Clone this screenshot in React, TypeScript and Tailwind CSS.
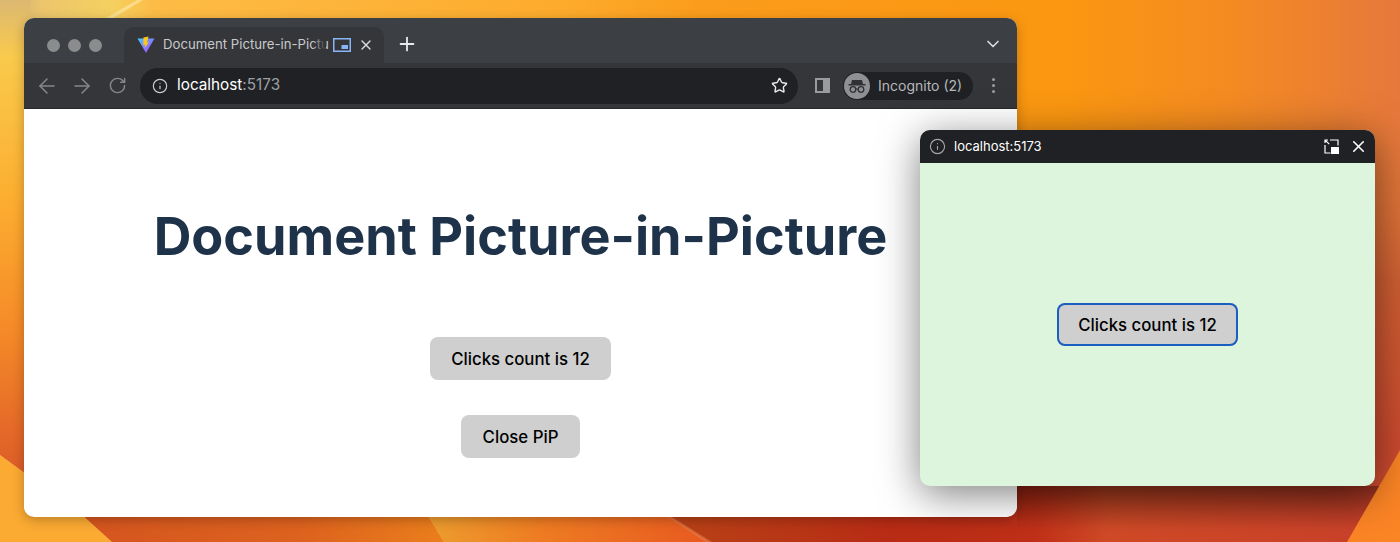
import { ArrowLeft, ArrowRight, ChevronDown, Info, Plus, RotateCw, Star, X } from "lucide-react";

const Wallpaper = () => (
  <svg className="absolute inset-0" width="1400" height="542" viewBox="0 0 1400 542">
    <defs>
      <linearGradient id="top" gradientUnits="userSpaceOnUse" x1="0" y1="0" x2="1400" y2="0">
        <stop offset="0" stopColor="#c9a97a" />
        <stop offset="0.03" stopColor="#ecc56c" />
        <stop offset="0.08" stopColor="#f5d060" />
        <stop offset="0.11" stopColor="#fdbc46" />
        <stop offset="0.4" stopColor="#fdab2c" />
        <stop offset="0.5" stopColor="#fb9c1c" />
        <stop offset="0.76" stopColor="#fb9710" />
        <stop offset="0.88" stopColor="#f48a22" />
        <stop offset="1" stopColor="#e6783c" />
      </linearGradient>
      <linearGradient id="left" gradientUnits="userSpaceOnUse" x1="0" y1="0" x2="0" y2="472">
        <stop offset="0" stopColor="#dcb872" />
        <stop offset="0.12" stopColor="#f9ca4c" />
        <stop offset="0.42" stopColor="#fcae30" />
        <stop offset="0.7" stopColor="#f58a28" />
        <stop offset="1" stopColor="#dd5c28" />
      </linearGradient>
      <linearGradient id="right" gradientUnits="userSpaceOnUse" x1="0" y1="120" x2="0" y2="440">
        <stop offset="0" stopColor="#e07a3a" stopOpacity="0" />
        <stop offset="0.5" stopColor="#cf5f33" />
        <stop offset="1" stopColor="#cc4a2f" />
      </linearGradient>
      <linearGradient id="bandA" gradientUnits="userSpaceOnUse" x1="84" y1="0" x2="444" y2="0">
        <stop offset="0" stopColor="#d5551f" />
        <stop offset="0.6" stopColor="#dd621e" />
        <stop offset="1" stopColor="#ea7e1c" />
      </linearGradient>
      <linearGradient id="bandB" gradientUnits="userSpaceOnUse" x1="424" y1="0" x2="708" y2="0">
        <stop offset="0" stopColor="#ec9e2e" />
        <stop offset="0.4" stopColor="#ee7c22" />
        <stop offset="1" stopColor="#e85a20" />
      </linearGradient>
      <linearGradient id="bandC" gradientUnits="userSpaceOnUse" x1="668" y1="0" x2="1400" y2="0">
        <stop offset="0" stopColor="#b84216" />
        <stop offset="0.3" stopColor="#b82c15" />
        <stop offset="0.5" stopColor="#c03018" />
        <stop offset="0.6" stopColor="#d04a26" />
        <stop offset="1" stopColor="#c9402a" />
      </linearGradient>
      <linearGradient id="shade" gradientUnits="userSpaceOnUse" x1="0" y1="486" x2="0" y2="530">
        <stop offset="0" stopColor="#000" stopOpacity="0.3" />
        <stop offset="1" stopColor="#000" stopOpacity="0" />
      </linearGradient>
    </defs>
    <rect width="1400" height="542" fill="url(#top)" />
    <rect x="1017" y="120" width="383" height="366" fill="url(#right)" />
    <polygon points="0,0 30,0 30,477 0,455" fill="url(#left)" />
    <polygon points="0,455 30,477 84,517 112,542 0,542" fill="#fbaa32" />
    <polygon points="50,486 410,486 444,542 112,542" fill="url(#bandA)" />
    <polygon points="410,486 620,486 708,542 444,542" fill="url(#bandB)" />
    <polygon points="620,486 1400,486 1400,542 708,542" fill="url(#bandC)" />
    <rect x="1017" y="486" width="383" height="56" fill="url(#shade)" />
    <polygon points="668,517 672,517 712,542 706,542" fill="#f08a5a" opacity="0.5" />
    <polygon points="1400,450 1400,542 1347,542" fill="#fb8425" />
    <polygon points="137,0 143,0 113,18 106,18" fill="#fde6a0" opacity="0.7" />
  </svg>
);

const ViteLogo = () => (
  <svg width="18" height="18" viewBox="0 0 18 18">
    <defs>
      <linearGradient id="viteA" x1="0" y1="0" x2="1" y2="1">
        <stop offset="0" stopColor="#41d1ff" />
        <stop offset="1" stopColor="#bd34fe" />
      </linearGradient>
    </defs>
    <path d="M0.5 2.5 L17.5 2.5 L9 17 Z" fill="url(#viteA)" />
    <path d="M11.5 0.5 L6.5 1.5 L6.2 9 L8 8.6 L7.6 12 L12 6.2 L10 6.5 Z" fill="#ffc517" />
  </svg>
);

const PipIcon = () => (
  <svg width="18" height="14" viewBox="0 0 18 14" fill="none">
    <rect x="0.75" y="0.75" width="16.5" height="12.5" stroke="#8ab4f8" strokeWidth="1.5" />
    <rect x="8.5" y="7" width="6.5" height="4" fill="#8ab4f8" />
  </svg>
);

const BackToTabIcon = () => (
  <svg width="15" height="15" viewBox="0 0 15 15" fill="none">
    <path d="M6 1 H14 V6.5 M1 6 V14 H6.5" stroke="#fff" strokeWidth="1.2" />
    <path d="M1.2 1.2 L5.2 5.2 M1 4 V1 H4" stroke="#fff" strokeWidth="1.2" />
    <rect x="7" y="8" width="8" height="7" fill="#fff" />
  </svg>
);

const IncognitoIcon = () => (
  <div className="flex h-[26px] w-[26px] items-center justify-center rounded-full bg-[#8f9093]">
    <svg width="20" height="18" viewBox="0 0 20 18" fill="none">
      <path d="M5 3 H15 L16 7 H4 Z" fill="#303134" />
      <rect x="1.5" y="7" width="17" height="1.5" fill="#303134" />
      <circle cx="6" cy="12.5" r="2.8" stroke="#303134" strokeWidth="1.3" />
      <circle cx="14" cy="12.5" r="2.8" stroke="#303134" strokeWidth="1.3" />
      <path d="M8.8 12 H11.2" stroke="#303134" strokeWidth="1.2" />
    </svg>
  </div>
);

const btn = "rounded-lg bg-[#cfcfcf] px-[21.5px] pt-[10px] pb-[8px] text-[16.8px] font-medium leading-[25px] text-black";

export default function App() {
  return (
    <div className="relative h-[542px] w-[1400px] overflow-hidden font-['Inter',sans-serif]">
      <Wallpaper />

      {/* main browser window */}
      <div className="absolute left-6 top-[18px] flex h-[499px] w-[993px] flex-col overflow-hidden rounded-[10px] bg-white shadow-[0_3px_12px_rgba(0,0,0,0.25)]">
        <div className="flex h-[45px] items-end bg-[#3c3f43] pl-[23px] pr-[14px]">
          <div className="mb-[11px] mr-[22px] flex gap-[8px]">
            <span className="h-[13px] w-[13px] rounded-full bg-[#8a8c8e]" />
            <span className="h-[13px] w-[13px] rounded-full bg-[#8a8c8e]" />
            <span className="h-[13px] w-[13px] rounded-full bg-[#8a8c8e]" />
          </div>
          <div className="flex h-9 w-[260px] items-center rounded-t-[10px] bg-[#35363a] pl-[13px] pr-[10px]">
            <ViteLogo />
            <div className="relative ml-[8px] w-[163px] whitespace-nowrap text-[13.2px] text-[#c8cacc]">
              Document Picture-in-Pictu
              <span className="absolute inset-y-0 right-0 w-[14px] bg-gradient-to-r from-transparent to-[#35363a]" />
            </div>
            <span className="ml-[7px] flex">
              <PipIcon />
            </span>
            <X size={16} strokeWidth={2} className="ml-[7px] text-[#dadce0]" />
          </div>
          <Plus size={22} strokeWidth={2} className="mb-[8px] ml-[12px] text-[#e8eaed]" />
          <ChevronDown size={20} strokeWidth={2} className="mb-[9px] ml-auto text-[#dadce0]" />
        </div>

        <div className="flex h-[46px] items-center border-b border-[#28292c] bg-[#35363a] pl-[11px]">
          <ArrowLeft size={24} strokeWidth={1.5} className="text-[#85878a]" />
          <ArrowRight size={24} strokeWidth={1.5} className="ml-[11px] text-[#85878a]" />
          <RotateCw size={19} strokeWidth={1.8} className="ml-[14px] text-[#85878a]" />
          <div className="ml-[13px] flex h-9 w-[658px] items-center rounded-full bg-[#202124] pl-[12px] pr-[10px]">
            <Info size={16} strokeWidth={1.8} className="text-[#c8cacc]" />
            <span className="ml-[9px] text-[15.3px] text-white">
              localhost<span className="text-[#9aa0a6]">:5173</span>
            </span>
            <Star size={17} strokeWidth={2} className="ml-auto text-[#e8eaed]" />
          </div>
          <div className="ml-[17px] h-[15px] w-[15px] border-[2px] border-r-[7px] border-[#9a9b9d]" />
          <div className="ml-[13px] flex h-7 w-[130px] items-center rounded-full bg-[#202124] pl-[1px]">
            <IncognitoIcon />
            <span className="ml-[8px] text-[14px] text-[#b6b8bb]">Incognito (2)</span>
          </div>
          <div className="ml-[19px] flex flex-col gap-[3px]">
            <span className="h-[3px] w-[3px] rounded-full bg-[#9a9b9d]" />
            <span className="h-[3px] w-[3px] rounded-full bg-[#9a9b9d]" />
            <span className="h-[3px] w-[3px] rounded-full bg-[#9a9b9d]" />
          </div>
        </div>

        <div className="flex flex-1 flex-col items-center pt-[92px]">
          <h1 className="text-[52.2px] font-bold leading-[70px] text-[#1e3249]">Document Picture-in-Picture</h1>
          <button className={`${btn} mt-[66px]`}>Clicks count is 12</button>
          <button className={`${btn} mt-[35px]`}>Close PiP</button>
        </div>
      </div>

      {/* picture-in-picture window */}
      <div className="absolute left-[920px] top-[130px] flex h-[356px] w-[455px] flex-col overflow-hidden rounded-[10px] bg-[#def5dd] shadow-[0_8px_40px_rgba(0,0,0,0.5)]">
        <div className="flex h-[33px] items-center bg-[#202124] pl-[9px] pr-[7px]">
          <Info size={17} strokeWidth={1.6} className="text-[#a5a7aa]" />
          <span className="ml-[8px] text-[13px] text-white">localhost:5173</span>
          <span className="ml-auto flex">
            <BackToTabIcon />
          </span>
          <X size={19} strokeWidth={2} className="ml-[10px] text-white" />
        </div>
        <div className="flex flex-1 items-center justify-center">
          <button className={`${btn} rounded-[10px] ring-2 ring-inset ring-[#1a5fc0]`}>Clicks count is 12</button>
        </div>
      </div>
    </div>
  );
}
